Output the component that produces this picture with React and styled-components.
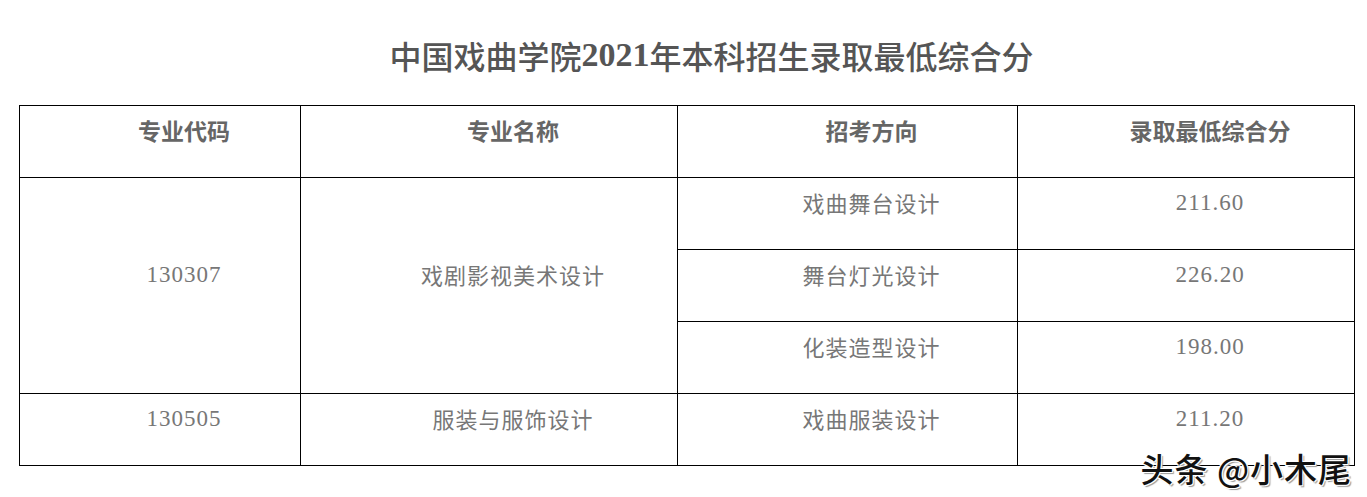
import React from 'react'
import styled, { createGlobalStyle } from 'styled-components'

const GlobalStyle = createGlobalStyle`
  html, body {
    margin: 0;
    padding: 0;
    background: #fff;
  }
  body {
    font-family: "Noto Sans CJK SC", "Liberation Serif", serif;
  }
`

const Page = styled.div`
  position: relative;
  width: 1367px;
  height: 497px;
  padding-left: 19px;
  box-sizing: border-box;
  overflow: hidden;
`

const Title = styled.h1`
  margin: 0;
  height: 105px;
  width: 1335px;
  box-sizing: border-box;
  padding: 4px 0 0 50px;
  display: flex;
  align-items: center;
  justify-content: center;
  font-size: 32px;
  font-weight: 500;
  color: #555;
  & span {
    font-family: "Liberation Serif", serif;
    font-size: 34px;
    font-weight: 700;
  }
`

const Table = styled.table`
  border-collapse: collapse;
  table-layout: fixed;
  width: 1335px;
`

const Cell = styled.td`
  border: 1px solid #000;
  height: 72px;
  box-sizing: border-box;
  padding: 0 0 24px 48px;
  text-align: center;
  vertical-align: middle;
  line-height: 24px;
  font-size: ${p => (p.$head ? '23px' : '22px')};
  font-weight: ${p => (p.$head ? 700 : 400)};
  color: ${p => (p.$head ? '#666' : '#777')};
  letter-spacing: ${p => (p.$head ? '0' : '1px')};
`

const Num = styled.span`
  font-family: "Liberation Serif", serif;
  font-size: 23px;
  letter-spacing: 1px;
`

const Watermark = styled.div`
  position: absolute;
  right: 15px;
  top: 444px;
  font-family: "Noto Sans CJK SC", sans-serif;
  font-size: 33px;
  font-weight: 500;
  color: #111;
  letter-spacing: 1px;
  text-shadow: -1px -1px 0 #fff, 1px -1px 0 #fff, -1px 1px 0 #fff, 1px 1px 0 #fff, 2px 2px 1px #999;
`

const rows = [
  { dir: '戏曲舞台设计', score: '211.60' },
  { dir: '舞台灯光设计', score: '226.20' },
  { dir: '化装造型设计', score: '198.00' }
]

export default function App () {
  return (
    <Page>
      <GlobalStyle />
      <Title>中国戏曲学院<span>2021</span>年本科招生录取最低综合分</Title>
      <Table>
        <colgroup>
          <col style={{ width: 281 }} />
          <col style={{ width: 377 }} />
          <col style={{ width: 340 }} />
          <col style={{ width: 337 }} />
        </colgroup>
        <tbody>
          <tr>
            <Cell $head>专业代码</Cell>
            <Cell $head>专业名称</Cell>
            <Cell $head>招考方向</Cell>
            <Cell $head>录取最低综合分</Cell>
          </tr>
          {rows.map((r, i) => (
            <tr key={r.dir}>
              {i === 0 && (
                <>
                  <Cell rowSpan={3}><Num>130307</Num></Cell>
                  <Cell rowSpan={3}>戏剧影视美术设计</Cell>
                </>
              )}
              <Cell>{r.dir}</Cell>
              <Cell><Num>{r.score}</Num></Cell>
            </tr>
          ))}
          <tr>
            <Cell><Num>130505</Num></Cell>
            <Cell>服装与服饰设计</Cell>
            <Cell>戏曲服装设计</Cell>
            <Cell><Num>211.20</Num></Cell>
          </tr>
        </tbody>
      </Table>
      <Watermark>头条 @小木尾</Watermark>
    </Page>
  )
}
